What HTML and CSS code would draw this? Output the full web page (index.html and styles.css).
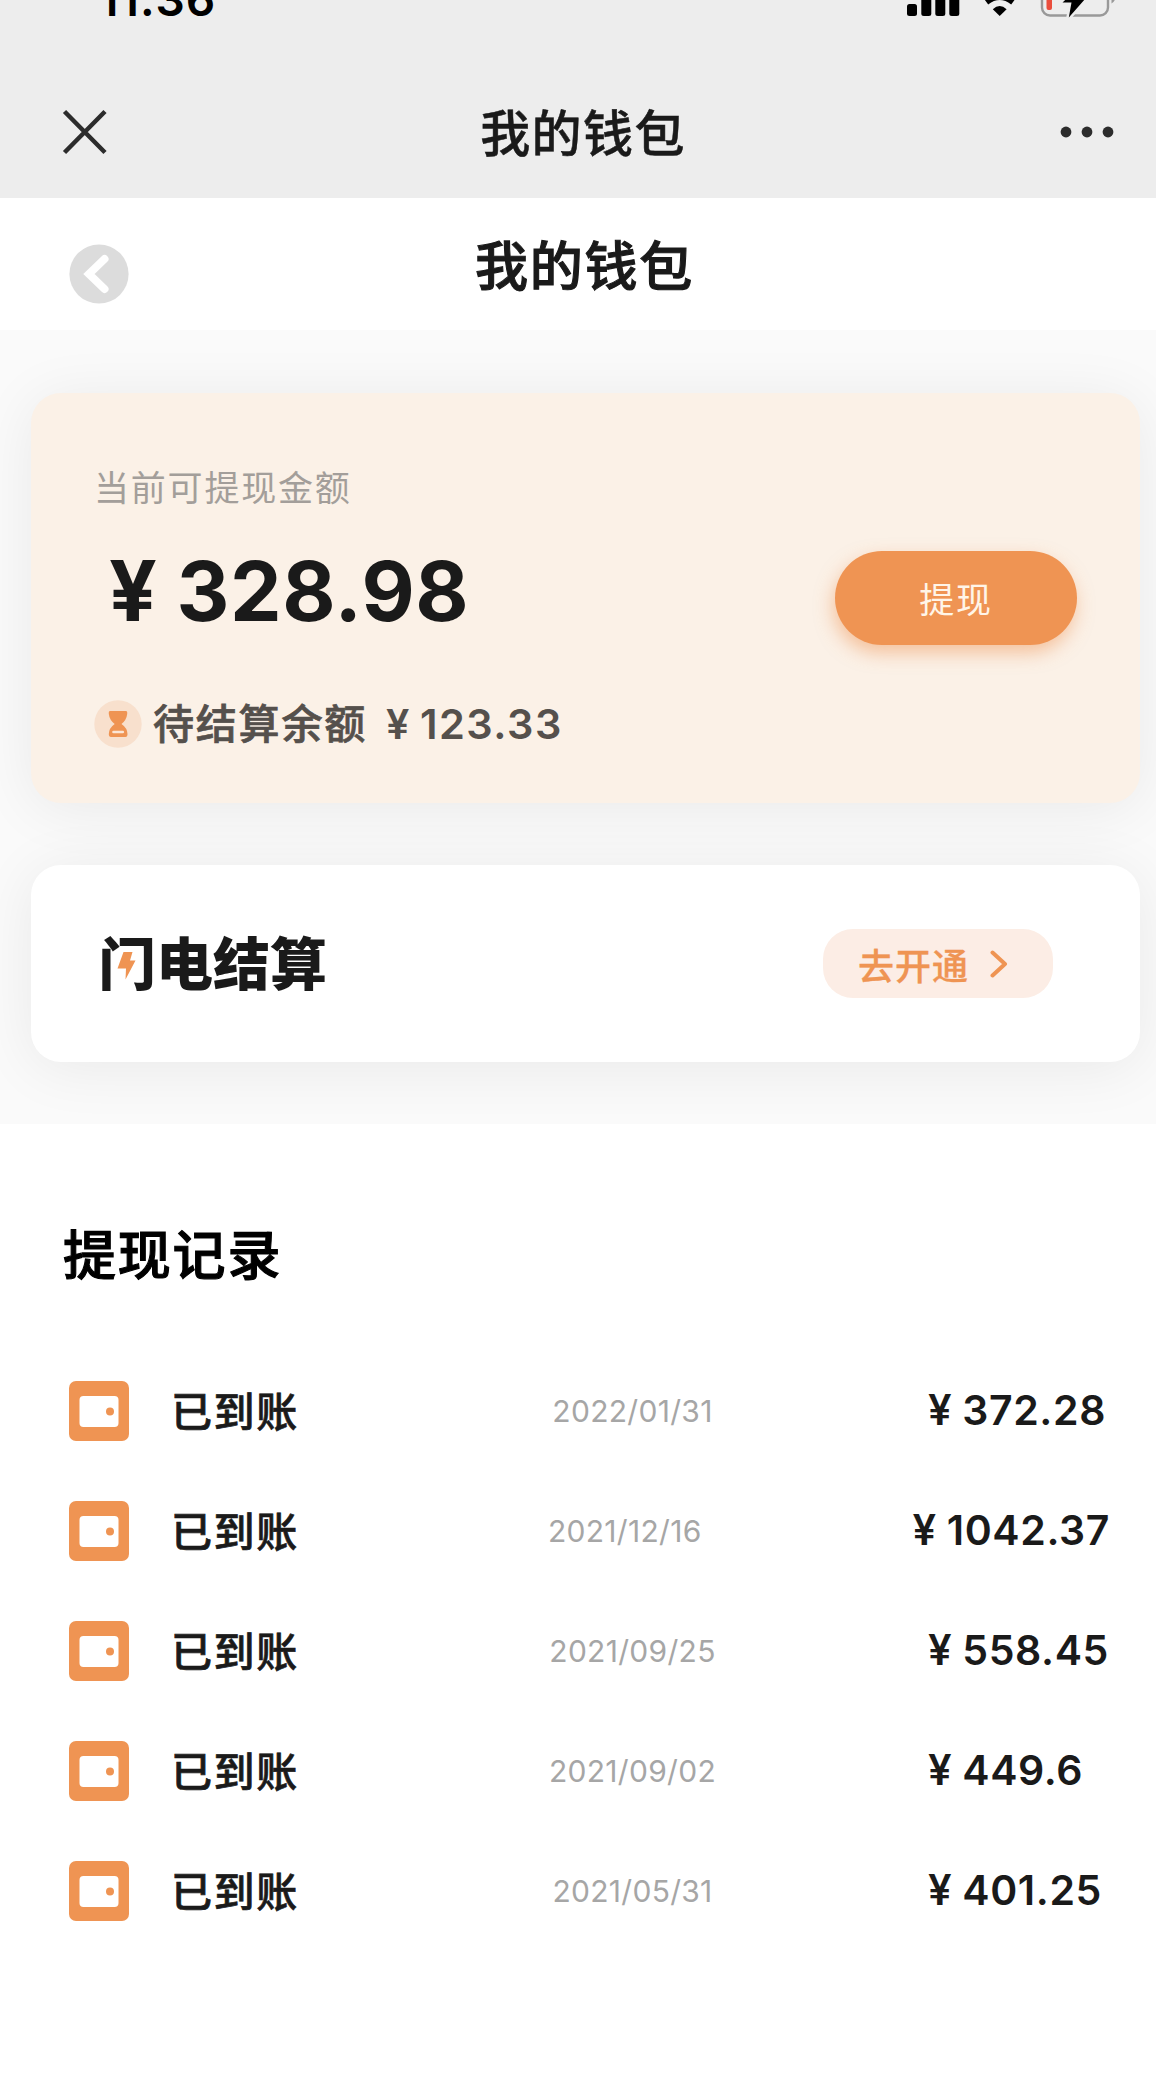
FILE: index.html
```html
<!DOCTYPE html>
<html lang="zh-CN">
<head>
<meta charset="utf-8">
<title>我的钱包</title>
<link rel="stylesheet" href="styles.css">
</head>
<body>
<svg class="defs" width="0" height="0">
  <symbol id="wallet" viewBox="0 0 60 60">
    <rect width="60" height="60" rx="7" fill="#ef9453"/>
    <rect x="10.500" y="15" width="39" height="31" rx="4" fill="#fff"/>
    <circle cx="41" cy="30.500" r="4" fill="#ef9453"/>
  </symbol>
</svg>
<div class="page">
  <header class="top">
    <div class="status">
      <span class="time">11:36</span>
      <svg class="signals" width="216" height="18" viewBox="0 0 216 18">
        <rect x="7" y="4" width="10" height="12" rx="2.500"/>
        <rect x="21.300" y="-6" width="10" height="22" rx="2.500"/>
        <rect x="35.300" y="-10" width="10" height="26" rx="2.500"/>
        <rect x="49.300" y="-14" width="10" height="30" rx="2.500"/>
        <path d="M99.700 16L92.800 9.200Q99.700 2.800 106.600 9.200Z"/>
        <path d="M86.400 2Q99.700 -8 113 2" fill="none" stroke="#000" stroke-width="6"/>
        <rect x="142" y="-16" width="66" height="31.500" rx="8" fill="none" stroke="#999" stroke-width="2.400"/>
        <rect x="146.500" y="-12" width="5.500" height="22" rx="2" fill="#ea4e3d"/>
        <path d="M211.500 -4H216Q215.500 1 211.500 3.500Z" fill="#999"/>
        <path d="M178 -12L162.500 2.500H171.500L168.800 17.500L185.500 -1.500H175Z" stroke="#ededed" stroke-width="5" paint-order="stroke"/>
      </svg>
    </div>
    <nav class="nav">
      <svg width="46" height="46" viewBox="0 0 46 46"><path d="M2.500 2.500L43 43.500M43 2.500L2.500 43.500" stroke="#2c2c2c" stroke-width="4.500"/></svg>
      <span class="nav-title">我的钱包</span>
      <svg width="54" height="12" viewBox="0 0 54 12" fill="#2c2c2c"><circle cx="6" cy="6" r="5.400"/><circle cx="27" cy="6" r="5.400"/><circle cx="48" cy="6" r="5.400"/></svg>
    </nav>
  </header>

  <div class="page-head">
    <svg width="60" height="60" viewBox="0 0 60 60"><circle cx="30" cy="30" r="29.600" fill="#dcdcdc"/><path d="M35.500 15L20 30L35.500 45" fill="none" stroke="#fff" stroke-width="8" stroke-linecap="round" stroke-linejoin="miter"/></svg>
    <h1 class="page-title">我的钱包</h1>
  </div>

  <main class="cards">
    <section class="card balance">
      <div class="balance-info">
        <div class="label">当前可提现金额</div>
        <div class="amount"><span class="yen">¥</span>328.98</div>
        <div class="pending">
          <svg width="48" height="48" viewBox="0 0 48 48"><circle cx="24" cy="24" r="23.700" fill="#f8e0cd"/><path d="M16 11H32Q33.500 11 33.200 14Q32.500 20 27.500 24Q33.300 28 33.500 34Q33.500 37 31.500 37H17Q14.800 37 14.800 34Q15 28 20.700 24Q15.500 20 14.800 14Q14.500 11 16 11Z" fill="#ef9453"/><path d="M19.500 32H28.800" stroke="#fbe6d6" stroke-width="2.600" stroke-linecap="round"/></svg>
          <span class="pending-label">待结算余额</span>
          <span class="pending-amount"><span class="yen">¥</span>123.33</span>
        </div>
      </div>
      <button class="withdraw">提现</button>
    </section>
    <section class="card flash">
      <h2 class="flash-title">闪电结算<svg class="bolt" width="57" height="64" viewBox="0 0 57 64"><path d="M12 22H21.500V14.800H44.300V49H12Z" fill="#fff"/><path d="M24.500 19H33.500L31 27.500H36.500L26.500 46.500L27 35.500H18.500Z" fill="#ef9453"/></svg></h2>
      <a class="open">去开通<svg width="18" height="28" viewBox="0 0 18 28"><path d="M2.500 2.500L15 14L2.500 25.500" fill="none" stroke="#ef9453" stroke-width="4" stroke-linecap="round" stroke-linejoin="round"/></svg></a>
    </section>
  </main>

  <section class="records">
    <h2 class="records-title">提现记录</h2>
    <ul class="list">
      <li class="row"><svg class="wallet"><use href="#wallet"/></svg><span class="state">已到账</span><span class="date">2022/01/31</span><span class="sum"><span class="yen">¥</span>372.28</span></li>
      <li class="row"><svg class="wallet"><use href="#wallet"/></svg><span class="state">已到账</span><span class="date">2021/12/16</span><span class="sum"><span class="yen">¥</span>1042.37</span></li>
      <li class="row"><svg class="wallet"><use href="#wallet"/></svg><span class="state">已到账</span><span class="date">2021/09/25</span><span class="sum"><span class="yen">¥</span>558.45</span></li>
      <li class="row"><svg class="wallet"><use href="#wallet"/></svg><span class="state">已到账</span><span class="date">2021/09/02</span><span class="sum"><span class="yen">¥</span>449.6</span></li>
      <li class="row"><svg class="wallet"><use href="#wallet"/></svg><span class="state">已到账</span><span class="date">2021/05/31</span><span class="sum"><span class="yen">¥</span>401.25</span></li>
    </ul>
  </section>
</div>
</body>
</html>
```
FILE: styles.css
```css
* { box-sizing: border-box; margin: 0; padding: 0; }
body {
  background: #fff;
  color: #1a1a1a;
  font-family: Inter, "Noto Sans CJK SC", sans-serif;
}
svg { display: block; flex: none; }
.defs { position: absolute; }
.page { width: 1156px; height: 2079px; overflow: hidden; background: #fff; }

.top { height: 198px; background: #ededed; }
.status {
  display: flex;
  justify-content: space-between;
  height: 66px;
  padding-left: 99px;
  padding-right: 40px;
  overflow: hidden;
}
.time {
  margin-top: -24px;
  font-size: 46px;
  font-weight: 600;
  line-height: 46px;
  letter-spacing: 1px;
  color: #000;
}
.nav {
  display: grid;
  grid-template-columns: 300px 1fr 300px;
  align-items: center;
  height: 132px;
  padding: 0 42px 0 62px;
}
.nav > :last-child { justify-self: end; }
.nav-title {
  margin: 3px 0 0 -10px;
  text-align: center;
  font-size: 50px;
  font-weight: 500;
  line-height: 60px;
  letter-spacing: 1.4px;
  -webkit-text-stroke: .5px;
}

.page-head {
  display: grid;
  grid-template-columns: 300px 1fr 300px;
  height: 132px;
  padding: 0 69px;
  align-items: center;
}
.page-head svg { margin-top: 20px; }
.page-title {
  margin: 5px 0 0 13px;
  text-align: center;
  font-size: 53px;
  font-weight: 500;
  line-height: 64px;
  letter-spacing: 1.8px;
  -webkit-text-stroke: 1.1px;
}

.cards {
  display: flex;
  flex-direction: column;
  gap: 62px;
  height: 794px;
  padding: 63px 16px 0 31px;
  background: #fafafa;
  overflow: hidden;
}
.card { border-radius: 30px; box-shadow: 0 6px 60px rgba(0, 0, 0, .07); }
.balance {
  display: flex;
  justify-content: space-between;
  align-items: center;
  height: 410px;
  padding: 0 63px 0 63px;
  background: #fbf1e7;
}
.balance-info { align-self: flex-start; padding-top: 70px; }
.label {
  font-size: 35px;
  line-height: 50px;
  letter-spacing: 1.8px;
  color: #a39e9a;
}
.amount {
  margin: 33px 0 0 15px;
  font-size: 82px;
  font-weight: 650;
  line-height: 90px;
  letter-spacing: .6px;
}
.amount .yen { margin-right: 19px; font-size: 84px; }
.pending {
  display: flex;
  align-items: center;
  margin-top: 63px;
  color: #55504c;
}
.pending-label {
  margin-left: 11px;
  font-size: 41px;
  font-weight: 500;
  line-height: 48px;
  letter-spacing: 1.8px;
  -webkit-text-stroke: .7px;
}
.pending-amount {
  margin-left: 19px;
  font-size: 41.500px;
  font-weight: 600;
  line-height: 48px;
  letter-spacing: 1.5px;
}
.pending-amount .yen { margin-right: 9px; }
.withdraw {
  width: 242px;
  height: 94px;
  border: 0;
  border-radius: 47px;
  background: #ef9453;
  box-shadow: -2px 8px 18px rgba(239, 148, 83, .5);
  color: #fff5e8;
  font: 400 35px/50px "Noto Sans CJK SC", sans-serif;
  letter-spacing: 1.7px;
}
.flash {
  display: flex;
  justify-content: space-between;
  align-items: center;
  height: 197px;
  padding: 0 87px 0 68px;
  background: #fff;
}
.flash-title {
  position: relative;
  margin-top: 3px;
  font-size: 57px;
  font-weight: 900;
  line-height: 64px;
}
.bolt { position: absolute; left: 0; top: 0; }
.open {
  display: flex;
  align-items: center;
  gap: 21px;
  width: 230px;
  height: 69px;
  padding-left: 35px;
  border-radius: 30px;
  background: #fcede5;
  color: #ef9453;
  font-size: 36px;
  font-weight: 500;
  letter-spacing: 1px;
  -webkit-text-stroke: .3px;
}

.records { padding: 100px 46px 0 69px; }
.records-title {
  margin-left: -6px;
  font-size: 53px;
  font-weight: 500;
  line-height: 64px;
  letter-spacing: 1.8px;
  color: #000;
  -webkit-text-stroke: 1.1px;
}
.list { margin-top: 63px; list-style: none; }
.row { display: flex; align-items: center; height: 120px; }
.wallet { width: 60px; height: 60px; }
.state {
  width: 166px;
  margin: 1px 0 0 42px;
  font-size: 41px;
  font-weight: 500;
  line-height: 50px;
  letter-spacing: 1.6px;
  -webkit-text-stroke: .7px;
}
.date {
  margin: 0 auto;
  font-size: 30px;
  line-height: 40px;
  letter-spacing: .3px;
  color: #a6a6a6;
}
.sum {
  min-width: 182px;
  margin-top: -2px;
  font-size: 41px;
  font-weight: 600;
  line-height: 50px;
  letter-spacing: .6px;
}
.sum .yen { margin-right: 10px; font-size: 42px; }
```
